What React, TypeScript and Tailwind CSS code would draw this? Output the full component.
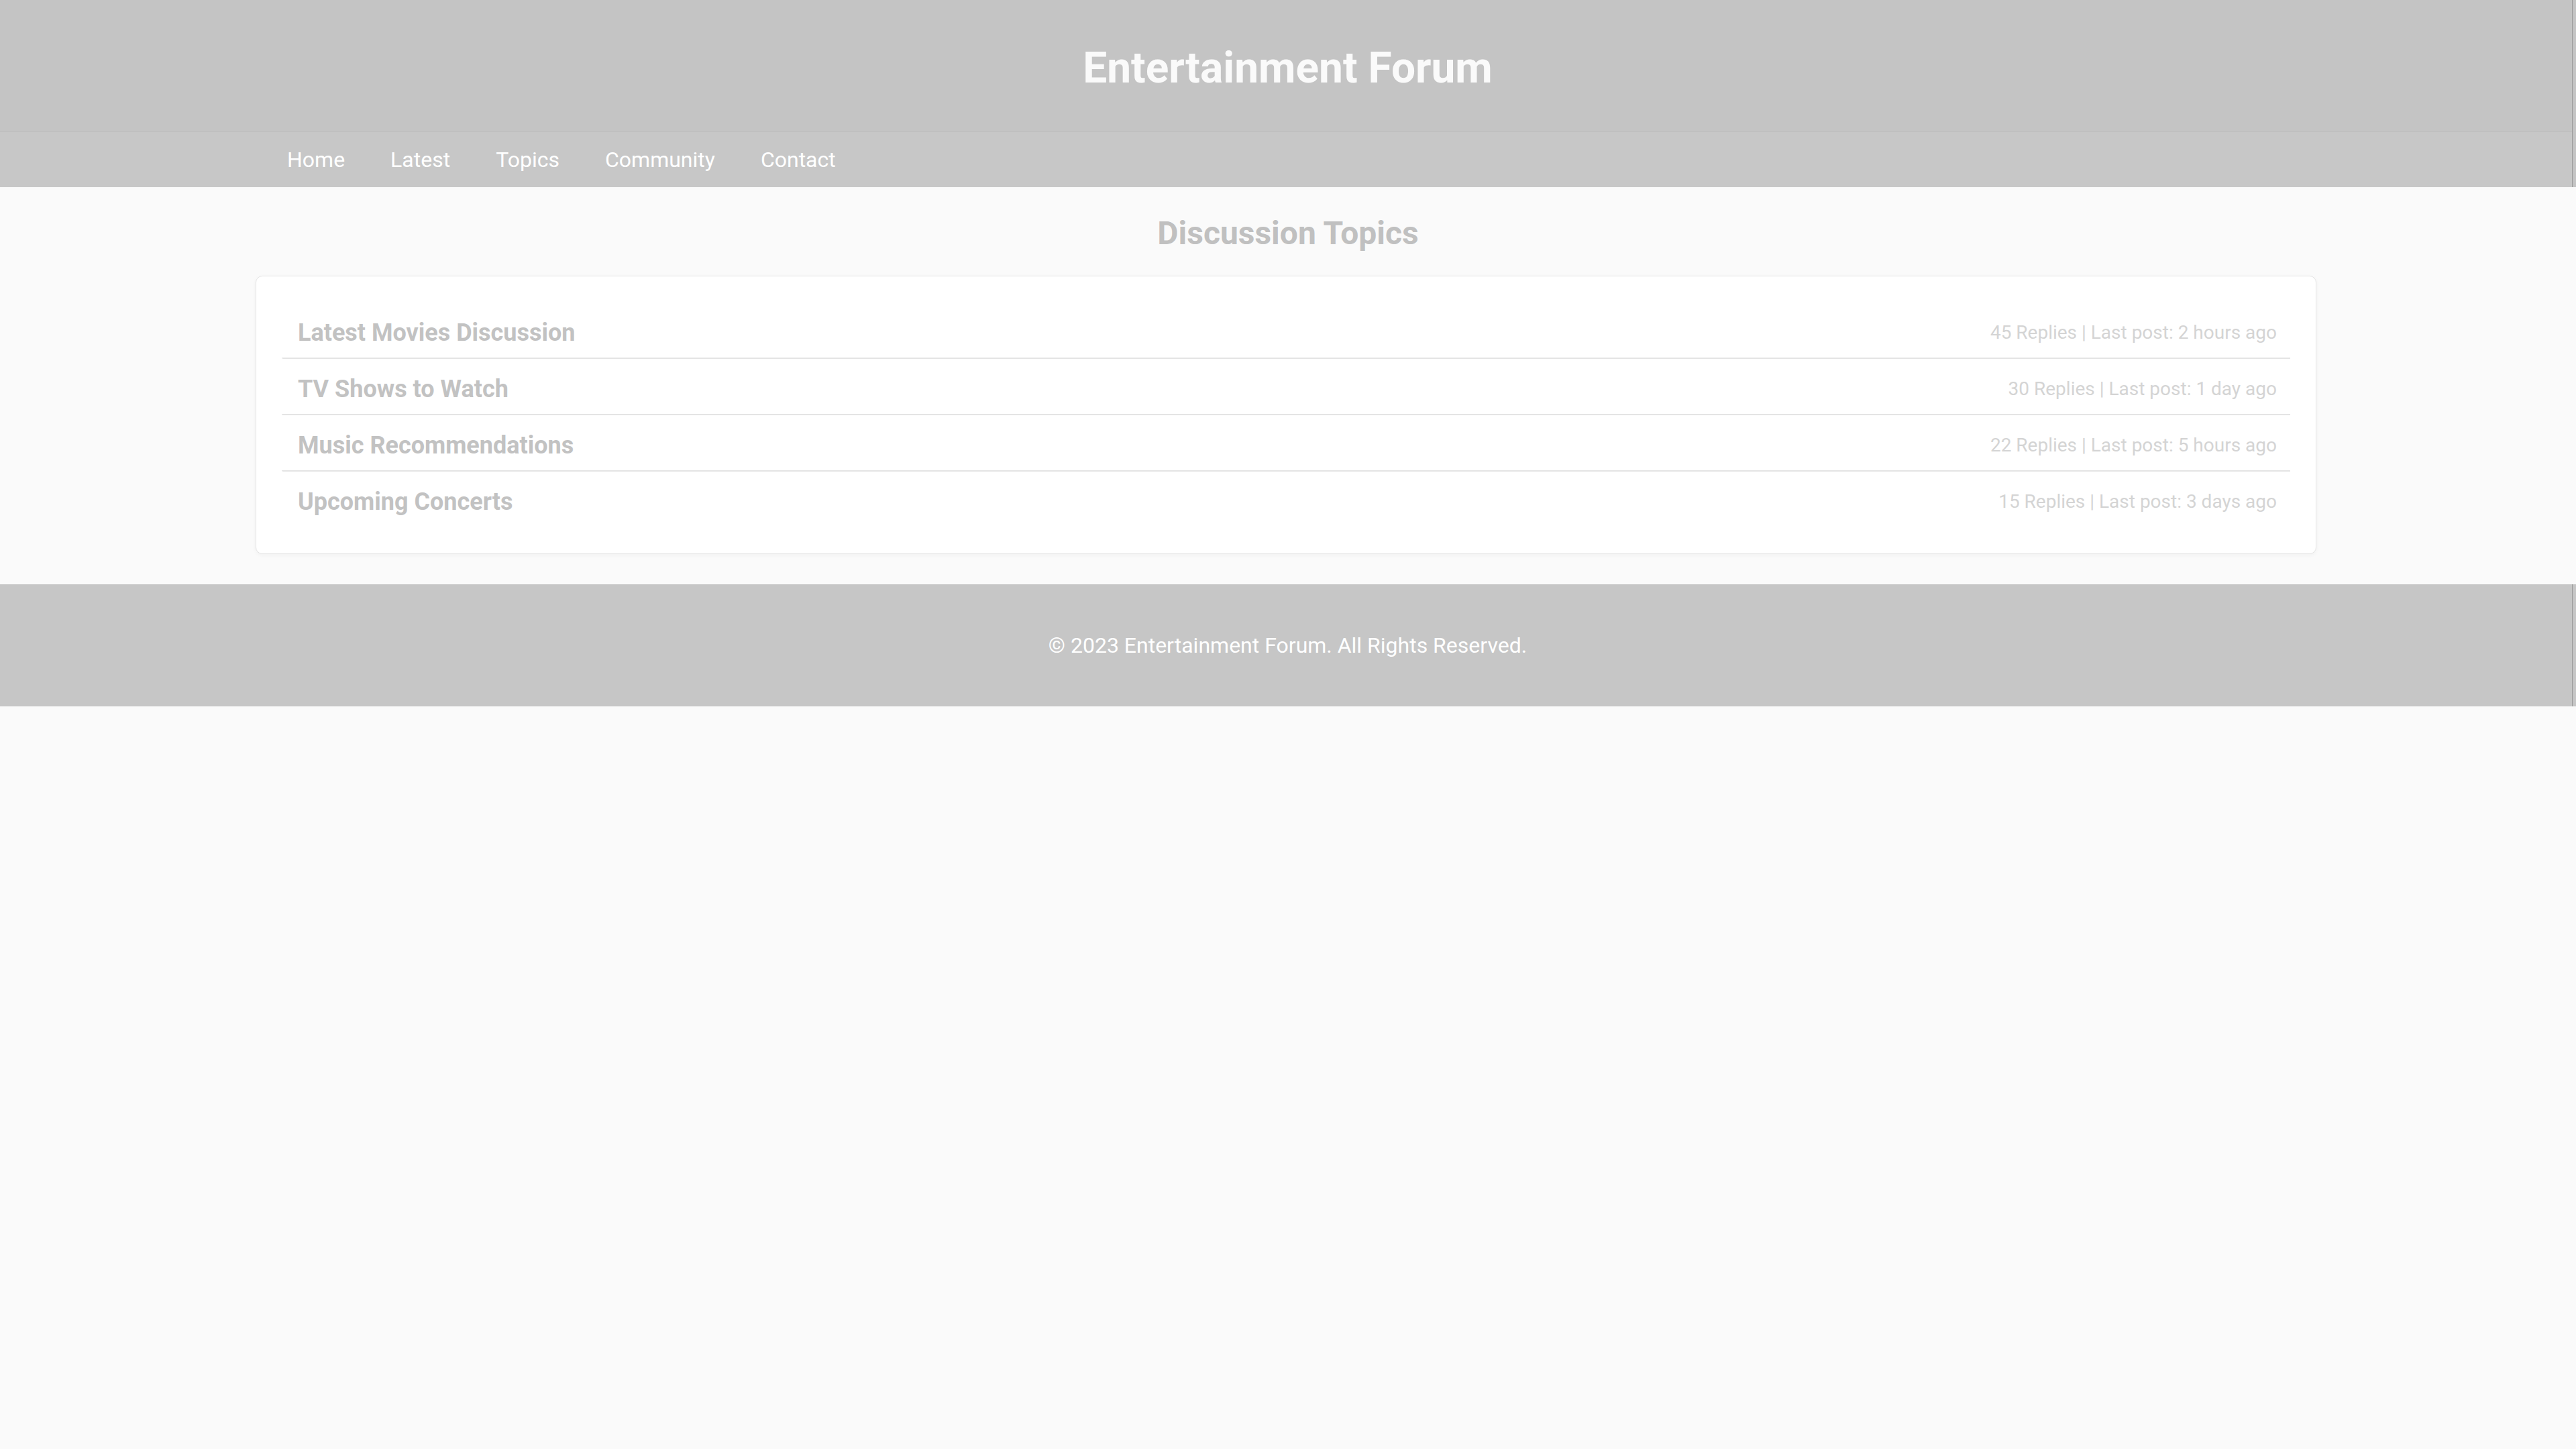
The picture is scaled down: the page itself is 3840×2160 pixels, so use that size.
import React from "react";

const topics = [
  { title: "Latest Movies Discussion", meta: "45 Replies | Last post: 2 hours ago" },
  { title: "TV Shows to Watch", meta: "30 Replies | Last post: 1 day ago" },
  { title: "Music Recommendations", meta: "22 Replies | Last post: 5 hours ago" },
  { title: "Upcoming Concerts", meta: "15 Replies | Last post: 3 days ago" },
];

const navItems = ["Home", "Latest", "Topics", "Community", "Contact"];

export default function App() {
  return (
    <div className="min-h-screen bg-[#fafafa] font-['Roboto','Liberation_Sans',sans-serif]">
      <div className="bg-[#c4c4c4] pr-[5px]">
        <div className="border-r border-[#9a9a9a]">
          <header className="h-[197px] pt-[8px] pl-[5px] flex items-center justify-center border-b border-[#bcbcbc]">
            <h1 className="text-[64px] font-bold text-[#fafafa] leading-none">Entertainment Forum</h1>
          </header>
          <nav className="h-[82px] bg-[#c7c7c7]">
            <ul className="w-[3072px] mx-auto h-full flex items-center gap-[68px] pl-[47px] text-[32px] text-white">
              {navItems.map((n) => (
                <li key={n}>{n}</li>
              ))}
            </ul>
          </nav>
        </div>
      </div>

      <div className="pr-[6px]">
        <main className="w-[3072px] mx-auto">
          <h2 className="mt-[41px] pl-[6px] text-center text-[48px] font-bold text-[#c0c0c0] leading-[56px]">
            Discussion Topics
          </h2>
          <div className="mt-[35px] bg-white border border-[#e4e4e4] rounded-[10px] shadow-[0_2px_6px_rgba(0,0,0,0.04)] px-[38px] pt-[39px] pb-[40px]">
            <ul>
              {topics.map((t) => (
                <li
                  key={t.title}
                  className="flex items-center justify-between pl-[24px] pr-[20px] pt-[24px] pb-[16px] border-b-2 border-[#e4e4e4] rounded-l-[2px] last:border-b-0"
                >
                  <span className="text-[36px] font-bold text-[#c2c2c2] leading-[42px]">{t.title}</span>
                  <span className="text-[28px] text-[#d4d4d4] leading-[42px]">{t.meta}</span>
                </li>
              ))}
            </ul>
          </div>
        </main>
      </div>

      <div className="mt-[45px] bg-[#c6c6c6] pr-[5px]">
        <footer className="h-[182px] pl-[5px] flex items-center justify-center border-r border-[#9a9a9a] text-[32px] text-white">
          © 2023 Entertainment Forum. All Rights Reserved.
        </footer>
      </div>
    </div>
  );
}
